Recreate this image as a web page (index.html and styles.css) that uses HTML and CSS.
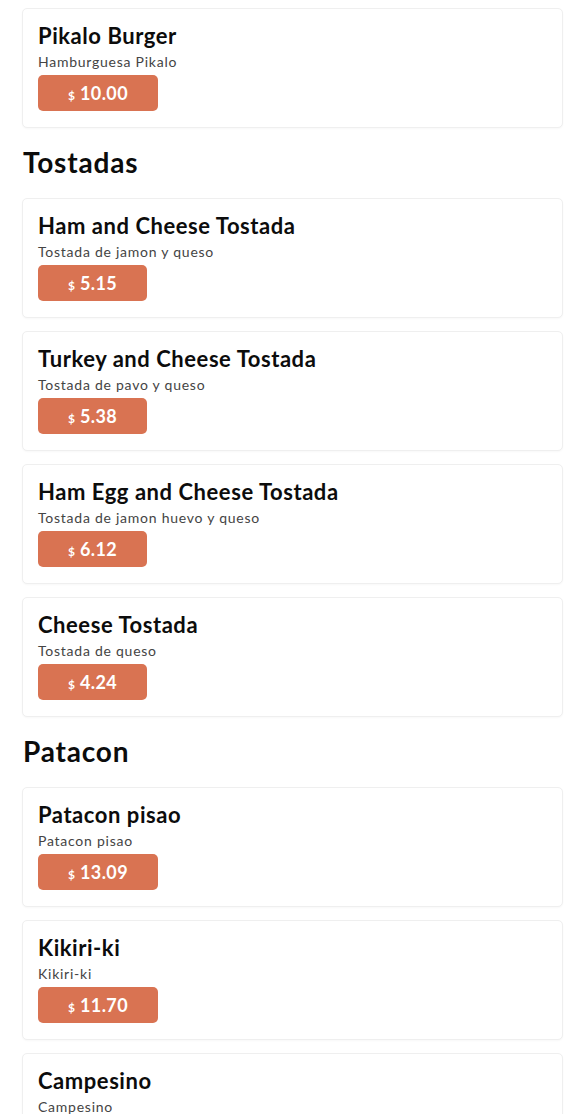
FILE: index.html
```html
<!DOCTYPE html>
<html>
<head>
<meta charset="utf-8">
<link rel="stylesheet" href="styles.css">
</head>
<body>
<main class="menu">
  <article class="card">
    <h3 class="item-title">Pikalo Burger</h3>
    <p class="item-desc">Hamburguesa Pikalo</p>
    <div class="price"><span class="cur">$</span><span class="amt">10.00</span></div>
  </article>

  <h2 class="section-title">Tostadas</h2>
  <article class="card">
    <h3 class="item-title">Ham and Cheese Tostada</h3>
    <p class="item-desc">Tostada de jamon y queso</p>
    <div class="price"><span class="cur">$</span><span class="amt">5.15</span></div>
  </article>
  <article class="card">
    <h3 class="item-title">Turkey and Cheese Tostada</h3>
    <p class="item-desc">Tostada de pavo y queso</p>
    <div class="price"><span class="cur">$</span><span class="amt">5.38</span></div>
  </article>
  <article class="card">
    <h3 class="item-title">Ham Egg and Cheese Tostada</h3>
    <p class="item-desc">Tostada de jamon huevo y queso</p>
    <div class="price"><span class="cur">$</span><span class="amt">6.12</span></div>
  </article>
  <article class="card">
    <h3 class="item-title">Cheese Tostada</h3>
    <p class="item-desc">Tostada de queso</p>
    <div class="price"><span class="cur">$</span><span class="amt">4.24</span></div>
  </article>

  <h2 class="section-title">Patacon</h2>
  <article class="card">
    <h3 class="item-title">Patacon pisao</h3>
    <p class="item-desc">Patacon pisao</p>
    <div class="price"><span class="cur">$</span><span class="amt">13.09</span></div>
  </article>
  <article class="card">
    <h3 class="item-title">Kikiri-ki</h3>
    <p class="item-desc">Kikiri-ki</p>
    <div class="price"><span class="cur">$</span><span class="amt">11.70</span></div>
  </article>
  <article class="card">
    <h3 class="item-title">Campesino</h3>
    <p class="item-desc">Campesino</p>
    <div class="price"><span class="cur">$</span><span class="amt">9.50</span></div>
  </article>
</main>
</body>
</html>
```

FILE: styles.css
```css
* { box-sizing: border-box; }
html, body { margin: 0; padding: 0; background: #ffffff; }
body {
  font-family: "Lato", "Noto Sans", "Liberation Sans", sans-serif;
  color: #111;
}
.menu {
  display: flex;
  flex-direction: column;
  padding: 8px 22px 0 22px;
  gap: 13px;
}
.card {
  border: 1px solid #efefef;
  border-radius: 5px;
  padding: 13px 15px 16px 15px;
  display: flex;
  flex-direction: column;
  align-items: flex-start;
  box-shadow: 0 1px 2px rgba(0,0,0,0.03);
  background: #fff;
}
.item-title {
  margin: 0;
  font-size: 22px;
  line-height: 28px;
  font-weight: 700;
  color: #0c0c0c;
  letter-spacing: 0.55px;
}
.item-desc {
  margin: 2px 0 0 0;
  font-size: 14px;
  line-height: 20px;
  color: #444;
  letter-spacing: 0.75px;
}
.price {
  margin-top: 3px;
  height: 36px;
  padding: 0 30px;
  border-radius: 5px;
  background: #d97352;
  color: #fff;
  display: flex;
  align-items: baseline;
  justify-content: center;
  gap: 5px;
  line-height: 36px;
}
.cur {
  font-size: 12px;
  font-weight: 700;
}
.amt {
  font-size: 18px;
  font-weight: 700;
  letter-spacing: 0.4px;
}
.section-title {
  margin: 3px 0 5px 1px;
  font-size: 28px;
  line-height: 36px;
  font-weight: 700;
  color: #0c0c0c;
  letter-spacing: 0.8px;
}
```
